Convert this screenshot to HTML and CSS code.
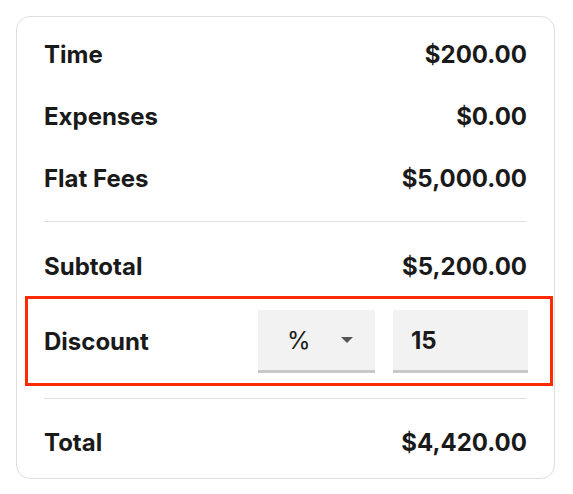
FILE: index.html
```html
<!DOCTYPE html>
<html lang="en">
<head>
    <meta charset="UTF-8">
    <meta name="viewport" content="width=device-width, initial-scale=1.0">
    <title>Invoice Summary</title>
    <link rel="stylesheet" href="styles.css">
</head>
<body>
    <div class="card">
        <div class="row">
            <span class="label">Time</span>
            <span class="amount">$200.00</span>
        </div>
        <div class="row">
            <span class="label">Expenses</span>
            <span class="amount">$0.00</span>
        </div>
        <div class="row">
            <span class="label">Flat Fees</span>
            <span class="amount">$5,000.00</span>
        </div>

        <hr class="divider">

        <div class="row subtotal">
            <span class="label">Subtotal</span>
            <span class="amount">$5,200.00</span>
        </div>

        <!-- Discount row (highlighted) -->
        <div class="row discount">
            <span class="label">Discount</span>
            <div class="controls">
                <div class="select">
                    <span>%</span>
                    <span class="caret"></span>
                </div>
                <div class="input">15</div>
            </div>
        </div>

        <hr class="divider bottom">

        <div class="row total">
            <span class="label">Total</span>
            <span class="amount">$4,420.00</span>
        </div>
    </div>
</body>
</html>
```

FILE: styles.css
```css
body {
    margin: 0;
    padding: 16px;
    font-family: Inter, 'Liberation Sans', Arial, sans-serif;
    color: #1a1a1a;
    background: #fff;
}

.card {
    width: 539px;
    box-sizing: border-box;
    border: 1px solid #dedede;
    border-radius: 14px;
    padding: 6px 27px 5px 27px;
}

.row {
    display: flex;
    justify-content: space-between;
    align-items: center;
    height: 62px;
    font-size: 24px;
    font-weight: bold;
}

.divider {
    border: none;
    border-top: 1px solid #e0e0e0;
    margin: 12px 1px 14px 0;
}

.divider.bottom {
    margin: 12px 1px 12px 0;
}

.subtotal {
    height: 60px;
}

.discount {
    height: auto;
    border: 3px solid #ff2a00;
    margin: 0 -26px 0 -19px;
    padding: 11px 22px 10px 16px;
}

.controls {
    display: flex;
    gap: 18px;
}

.select, .input {
    height: 60px;
    background: #f2f2f2;
    border-bottom: 3px solid #c8c8c8;
    display: flex;
    align-items: center;
    box-sizing: content-box;
}

.select {
    width: 88px;
    padding-left: 29px;
    font-weight: normal;
    gap: 30px;
}

.caret {
    width: 0;
    height: 0;
    border-left: 6px solid transparent;
    border-right: 6px solid transparent;
    border-top: 6px solid #555;
}

.input {
    width: 117px;
    padding-left: 18px;
}
```
